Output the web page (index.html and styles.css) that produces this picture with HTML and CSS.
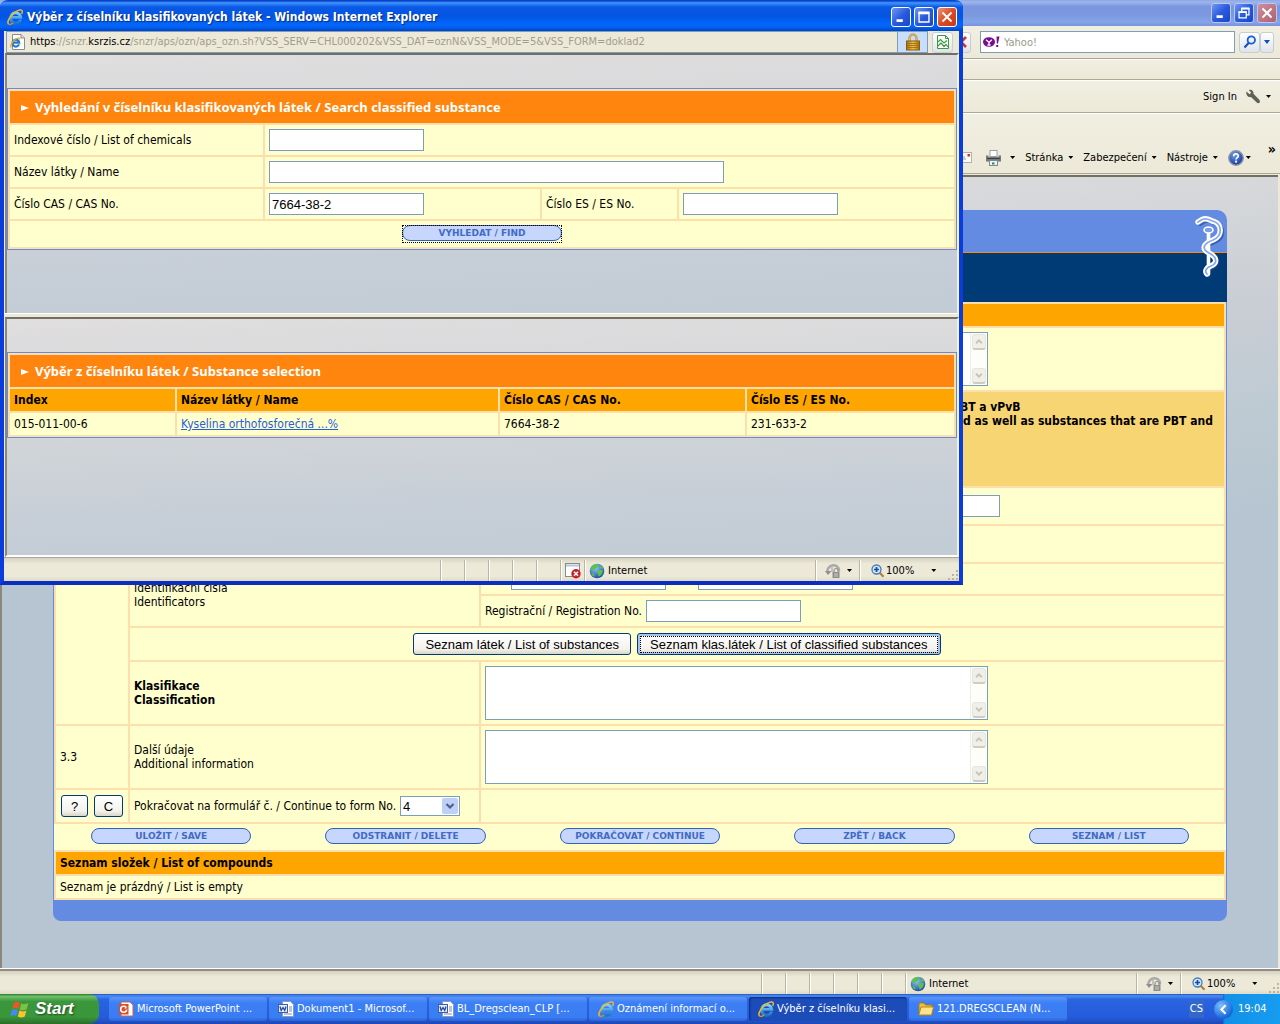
FILE: index.html
```html
<!DOCTYPE html>
<html lang="cs">
<head>
<meta charset="utf-8">
<title>Výběr z číselníku klasifikovaných látek</title>
<link rel="stylesheet" href="styles.css">
</head>
<body>
<svg class="sprite" aria-hidden="true">
  <defs>
    <linearGradient id="g-ie" x1="0" y1="0" x2="0" y2="1"><stop offset="0" stop-color="#7fd0f8"/><stop offset="1" stop-color="#1c74cc"/></linearGradient>
    <linearGradient id="g-lock" x1="0" y1="0" x2="1" y2="0"><stop offset="0" stop-color="#a8710c"/><stop offset=".5" stop-color="#f2c04c"/><stop offset="1" stop-color="#a8710c"/></linearGradient>
    <radialGradient id="g-globe" cx=".4" cy=".3" r=".8"><stop offset="0" stop-color="#8fc8f8"/><stop offset="1" stop-color="#123f94"/></radialGradient>
    <radialGradient id="g-help" cx=".4" cy=".3" r=".8"><stop offset="0" stop-color="#6d9bec"/><stop offset="1" stop-color="#0c2c8c"/></radialGradient>
  </defs>
  <symbol id="ie" viewBox="0 0 16 16">
    <path d="M13.600 10.600A5.200 5.200 0 1 1 13.800 8.400H5" fill="none" stroke="url(#g-ie)" stroke-width="2.900"/>
    <path d="M1.600 15.200C-.6 13 3 6.400 8.500 2.900 11.500 1 15 .2 15.300 2.200c.1 1-.3 1.900-.7 2.600" fill="none" stroke="#f2b52c" stroke-width="1.500"/>
    <path d="M1.600 15.200c1.200.8 3.200-.2 4.800-1.400" fill="none" stroke="#d9931a" stroke-width="1.300"/>
  </symbol>
  <symbol id="ie-page" viewBox="0 0 16 16">
    <path d="M2.500.5h8.500l3.500 3.500v11.500h-12z" fill="#fff" stroke="#8c8c8c"/><path d="M11 .5V4h3.500" fill="#ddd" stroke="#8c8c8c"/>
    <path d="M9 10.400A3.400 3.400 0 1 1 9.200 8.600H3.500" fill="none" stroke="#2379cf" stroke-width="2.200"/>
    <path d="M1 13.500C0 11 3 6.500 6 5c2.500-1.300 4-1 4 .5" fill="none" stroke="#efaa22" stroke-width="1.300"/>
  </symbol>
  <symbol id="lock" viewBox="0 0 16 18">
    <path d="M4.500 9V5.500a3.500 3.800 0 0 1 7 0V9" fill="none" stroke="#b98a2a" stroke-width="2.200"/>
    <path d="M4.500 9V5.500a3.500 3.800 0 0 1 7 0V9" fill="none" stroke="#f5d78a" stroke-width=".7"/>
    <rect x="1.500" y="8" width="13" height="9" fill="url(#g-lock)" stroke="#8a5c0a"/><path d="M2 10.500h12M2 12.500h12M2 14.500h12" stroke="#9a6a10" stroke-width=".8"/>
  </symbol>
  <symbol id="broken" viewBox="0 0 14 16">
    <path d="M1.500 1.500h8l3 3v10h-11z" fill="#fff" stroke="#3f9a3f"/><path d="M9.500 1.500v3h3" fill="none" stroke="#3f9a3f"/>
    <path d="M2 8l2.500-2.500L8 9l3-2.500M2 12l3-3 3 3.500 2-2 2 2.500" fill="none" stroke="#3f9a3f" stroke-width="1.200"/>
  </symbol>
  <symbol id="globe" viewBox="0 0 16 16">
    <circle cx="8" cy="8" r="7.300" fill="url(#g-globe)"/>
    <path d="M3 3.300C5 1 8 .7 9 1.200c-.5 1.500 1 2-.8 3.300-1.700.6-1.500 2.200-3.200 2.300C3.500 7 2 6.500 1.600 6c0-1 .6-1.900 1.400-2.700zM9 7.500c2-.8 3-.5 4.600-.5.600 2-1 5-3.600 6.500C8.500 12 9.800 10.500 8 9.500zM11 2.500c1.500.5 2.800 1.500 3.300 3-1.300.5-2.800 0-3.300-1zM2.500 10c1.500 0 2.700 1 3 2.500l-.6 1.300C3.500 13 2.700 11.500 2.500 10z" fill="#5cc24e"/>
  </symbol>
  <symbol id="blocked" viewBox="0 0 16 16">
    <rect x=".5" y=".5" width="14" height="13" fill="#fff" stroke="#8a8a8a"/><path d="M1 2.500h13" stroke="#b8c4d6" stroke-width="2"/>
    <circle cx="11" cy="10.800" r="4.700" fill="#c8202a"/><path d="M9 8.800l4 4m0-4l-4 4" stroke="#fff" stroke-width="1.500"/>
  </symbol>
  <symbol id="privacy" viewBox="0 0 16 16">
    <path d="M2 9C2.500 4 6 1.500 10 2.500c3 .8 4.500 3.500 4 6" fill="none" stroke="#a9a9a9" stroke-width="2.500"/><path d="M0 8l3 4 3.500-4z" fill="#8f8f8f"/>
    <path d="M7 4v5" stroke="#999"/><rect x="7.500" y="9" width="7" height="6" fill="#8d8d8d"/><path d="M9 9V7.500a2 2 0 0 1 4 0V9" fill="none" stroke="#8d8d8d" stroke-width="1.200"/><path d="M9 11h4M9 13h4" stroke="#ddd" stroke-width=".8"/>
  </symbol>
  <symbol id="zoom" viewBox="0 0 14 14">
    <path d="M8 8l4.500 4.800" stroke="#b08040" stroke-width="2.200"/><circle cx="5.500" cy="5.500" r="4.500" fill="#d4e8fb" stroke="#4a78b8" stroke-width="1.300"/><path d="M5.500 3v5M3 5.500h5" stroke="#0f4fa8" stroke-width="1.700"/>
  </symbol>
  <symbol id="search" viewBox="0 0 14 14">
    <circle cx="8.300" cy="5" r="3.700" fill="#e8f3ff" stroke="#1b5fd6" stroke-width="1.800"/><path d="M5.800 7.800L1.500 12.500" stroke="#1b4fc0" stroke-width="2.200"/>
  </symbol>
  <symbol id="wrench" viewBox="0 0 16 16">
    <path d="M1.500 2.500l3 2.700 1.700-1.500L3.800 1C6.500 0 9 2 8.500 4.800l6 6.200c1.500 2-.6 4-2.500 2.800L6 8C3.500 8.800.5 6 1.500 2.500z" fill="#5f6058"/>
  </symbol>
  <symbol id="printer" viewBox="0 0 17 16">
    <rect x="5" y=".5" width="7" height="6" fill="#fff" stroke="#a0a0a0"/><path d="M1 5.500h2.500V7h10V5.500H16v6H1z" fill="#77797d"/><path d="M2 8.500h13" stroke="#3f4144"/><rect x="4.500" y="10.500" width="8" height="5" fill="#eef4f4" stroke="#7d8c8c"/><path d="M7 12.500h2.500v2H7z" fill="#2a8a6a"/>
  </symbol>
  <symbol id="mail" viewBox="0 0 16 12">
    <rect x=".5" y=".5" width="15" height="10" fill="#fafafa" stroke="#b5b1a8"/><path d="M3 5h6M3 7h7" stroke="#999"/><rect x="11.500" y="2" width="2.500" height="2.500" fill="#d6322a"/>
  </symbol>
  <symbol id="help" viewBox="0 0 16 16">
    <circle cx="8" cy="8" r="7.200" fill="url(#g-help)" stroke="#8b93a8" stroke-width="1.500"/>
    <path d="M5.700 6.200C5.700 3.200 10.300 3.200 10.300 6c0 1.700-2.200 1.700-2.200 3.500" fill="none" stroke="#fff" stroke-width="1.700"/><circle cx="8.100" cy="11.700" r="1.100" fill="#fff"/>
  </symbol>
  <symbol id="yahoo" viewBox="0 0 17 12">
    <ellipse cx="6" cy="6" rx="6" ry="4.800" fill="#7a0c92"/><path d="M3 3.800l3 2.600 2.800-2.600M6 6.400v2.400M4.500 9h3" fill="none" stroke="#fff" stroke-width="1.300"/><path d="M13.500.5h3l-1.500 7h-1.200zM13.200 9h2v2h-2z" fill="#7a0c92"/>
  </symbol>
  <symbol id="stop" viewBox="0 0 16 16"><path d="M3 3l10 10M13 3L3 13" stroke="#c0392b" stroke-width="2.600"/></symbol>
  <symbol id="flag" viewBox="0 0 18 17">
    <path d="M3.500 2.500C5.500 1 7 1.500 9 2.500L7.500 8C5.500 7 4 7 2 8z" fill="#e8572a"/><path d="M10 3c2 1 4 1 6.500-.3L15 8.200c-2 1.200-4 1.300-6.300.2z" fill="#7dc242"/>
    <path d="M1.700 9c2-1 3.500-1 5.500 0l-1.500 5.500c-2-1-3.700-1-5.500 0z" fill="#3f8df0"/><path d="M8.500 9.500c2 1 4 1 6.300-.2l-1.500 5.500c-2.300 1.200-4.200 1-6.300 0z" fill="#fbc42c"/>
  </symbol>
  <symbol id="ppt" viewBox="0 0 16 16">
    <path d="M3 1h9l3 3v11H3z" fill="#fff" stroke="#d0604a"/><path d="M1 3h9.500v10.500H1z" fill="#d94e2a"/><circle cx="5.700" cy="8.200" r="3" fill="none" stroke="#fff" stroke-width="1.500"/><path d="M5.700 8.200h3.500V5.500" stroke="#d94e2a" stroke-width="1.200" fill="#fff"/>
  </symbol>
  <symbol id="word" viewBox="0 0 16 16">
    <path d="M4.500.5h8l3 3v12h-11z" fill="#fff" stroke="#8c9bbd"/><path d="M11 6h3M11 8h3M11 10h3M6 13h8" stroke="#7a8cb5"/><rect x=".5" y="3.500" width="9" height="8" fill="#e8effa" stroke="#3c5da8"/><path d="M2 5.500l1.200 4L5 6.500l1.700 3L8 5.500" fill="none" stroke="#23479c" stroke-width="1.300"/>
  </symbol>
  <symbol id="folder" viewBox="0 0 16 14">
    <path d="M1 12.500V2.500c0-1 .5-1.500 1.500-1.500h3.500l1.500 2h6.500v2" fill="#f1bf3c" stroke="#a67a12"/><path d="M1 12.500l2-7.500h12.500l-2 8H1.500z" fill="#fde38a" stroke="#b5871a"/>
  </symbol>
  <symbol id="win-min" viewBox="0 0 20 20"><path d="M5 14h7" stroke="#fff" stroke-width="3"/></symbol>
  <symbol id="win-max" viewBox="0 0 20 20"><path d="M4.500 5h11v10.500h-11z" fill="none" stroke="#fff" stroke-width="1.500"/><path d="M4 5.500h12" stroke="#fff" stroke-width="3"/></symbol>
  <symbol id="win-restore" viewBox="0 0 20 20"><path d="M7.500 8V5h8v7h-3" fill="none" stroke="#fff" stroke-width="1.400"/><path d="M7 5h9" stroke="#fff" stroke-width="2"/><path d="M4.500 9h8v6.500h-8z" fill="none" stroke="#fff" stroke-width="1.400"/><path d="M4 9h9" stroke="#fff" stroke-width="2"/></symbol>
  <symbol id="win-close" viewBox="0 0 20 20"><path d="M5 5l10 10M15 5L5 15" stroke="#fff" stroke-width="2.200"/></symbol>
  <symbol id="up" viewBox="0 0 14 15"><path d="M3.500 9.500L7 6l3.500 3.500" fill="none" stroke="#c6c5ba" stroke-width="2.200"/></symbol>
  <symbol id="down" viewBox="0 0 14 15"><path d="M3.500 5.500L7 9l3.500-3.500" fill="none" stroke="#c6c5ba" stroke-width="2.200"/></symbol>
  <symbol id="grip" viewBox="0 0 12 12"><path d="M9 1h2v2H9zM5 5h2v2H5zM9 5h2v2H9zM1 9h2v2H1zM5 9h2v2H5zM9 9h2v2H9z" fill="#b9b5a0"/></symbol>
</svg>

<div class="desktop">
  <section class="browser">
    <header class="titlebar inactive">
      <button class="winbtn" aria-label="Minimalizovat"><svg><use href="#win-min"/></svg></button>
      <button class="winbtn" aria-label="Obnovit"><svg><use href="#win-restore"/></svg></button>
      <button class="winbtn close" aria-label="Zavřít"><svg><use href="#win-close"/></svg></button>
    </header>
    <div class="bar address-row">
      <button class="softbtn stop" aria-label="Stop"><svg class="i16"><use href="#stop"/></svg></button>
      <label class="searchbox"><svg class="i17"><use href="#yahoo"/></svg><input type="text" placeholder="Yahoo!" aria-label="Yahoo!"></label>
      <div class="split">
        <button class="softbtn" aria-label="Hledat"><svg class="i14"><use href="#search"/></svg></button>
        <button class="softbtn narrow" aria-label="Možnosti hledání"><span class="caret blue"></span></button>
      </div>
    </div>
    <div class="bar links-row"></div>
    <div class="bar sign-row"><a href="#">Sign In</a><svg class="i16"><use href="#wrench"/></svg><span class="caret"></span></div>
    <nav class="bar command-row">
      <svg class="i16 mail"><use href="#mail"/></svg>
      <button class="cmd print" aria-label="Tisk"><svg class="i17"><use href="#printer"/></svg><span class="caret"></span></button>
      <button class="cmd">Stránka<span class="caret"></span></button>
      <button class="cmd">Zabezpečení<span class="caret"></span></button>
      <button class="cmd">Nástroje<span class="caret"></span></button>
      <button class="cmd help" aria-label="Nápověda"><svg class="i16"><use href="#help"/></svg><span class="caret"></span></button>
      <span class="more">»</span>
    </nav>

    <main class="page">
      <div class="panel">
        <div class="banner">
          <div class="banner-top"></div>
          <div class="banner-sub"></div>
          <svg class="emblem" viewBox="0 0 37 65">
            <g fill="none" stroke-linecap="round" stroke-linejoin="round">
              <g stroke="#1d3f8a" stroke-width="4" opacity=".55" transform="translate(2 2)"><path d="M8 8c4-2 4-4 9-3 3 .5 4 2 7 2.500 8 3 9 14-1 18.500-8 3-13 8-4 13 8 4 9 10 2 13-6 2-6 6-4 8"/></g>
              <path d="M18.500 16v44" stroke="#fff" stroke-width="3.600"/>
              <path d="M8 8c4-2 4-4 9-3 3 .5 4 2 7 2.500 8 3 9 14-1 18.500-8 3-13 8-4 13 8 4 9 10 2 13-6 2-6 6-4 8" stroke="#fff" stroke-width="5.400"/>
              <path d="M8 8c4-2 4-4 9-3 3 .5 4 2 7 2.500 8 3 9 14-1 18.500-8 3-13 8-4 13 8 4 9 10 2 13-6 2-6 6-4 8" stroke="#86a6ee" stroke-width="1.700"/>
              <ellipse cx="18.500" cy="16" rx="4.500" ry="3" fill="#7b9fec" stroke="#fff" stroke-width="1.600"/>
            </g>
          </svg>
        </div>
        <table class="grid form">
          <colgroup><col class="c-no"><col class="c-label"><col></colgroup>
          <tr class="h-head"><th colspan="3"></th></tr>
          <tr><td></td><td></td><td><div class="area"><textarea aria-label="Popis"></textarea><span class="scroll"><svg><use href="#up"/></svg><svg><use href="#down"/></svg></span></div></td></tr>
          <tr class="note"><td colspan="3"><p>PBT a vPvB<br>ied as well as substances that are PBT and</p></td></tr>
          <tr class="h-36"><td rowspan="6"></td><td></td><td><input class="w-long" type="text" aria-label="Název"></td></tr>
          <tr class="h-36"><td></td><td></td></tr>
          <tr><td rowspan="2" class="ident">Identifikační čísla<br>Identificators</td>
            <td><div class="field"><label for="cas">CAS</label><input id="cas" type="text"><label for="es" class="es">ES</label><input id="es" type="text"></div></td></tr>
          <tr><td><div class="field"><label for="reg">Registrační / Registration No.</label><input id="reg" type="text"></div></td></tr>
          <tr class="h-32"><td colspan="2"><div class="center"><button class="xp">Seznam látek / List of substances</button><button class="xp default"><span>Seznam klas.látek / List of classified substances</span></button></div></td></tr>
          <tr><td><label for="klas"><b>Klasifikace<br>Classification</b></label></td><td><div class="area"><textarea id="klas"></textarea><span class="scroll"><svg><use href="#up"/></svg><svg><use href="#down"/></svg></span></div></td></tr>
          <tr><td class="num">3.3</td><td><label for="dalsi">Další údaje<br>Additional information</label></td><td><div class="area"><textarea id="dalsi"></textarea><span class="scroll"><svg><use href="#up"/></svg><svg><use href="#down"/></svg></span></div></td></tr>
          <tr class="h-32"><td><div class="small-btns"><button class="xp">?</button><button class="xp">C</button></div></td>
            <td><div class="field"><label for="form-no">Pokračovat na formulář č. / Continue to form No.</label><select id="form-no"><option>4</option></select></div></td><td></td></tr>
        </table>
        <div class="actions">
          <button class="pill">ULOŽIT / SAVE</button><button class="pill">ODSTRANIT / DELETE</button><button class="pill">POKRAČOVAT / CONTINUE</button><button class="pill">ZPĚT / BACK</button><button class="pill">SEZNAM / LIST</button>
        </div>
        <table class="grid list">
          <tr class="h-head"><th>Seznam složek / List of compounds</th></tr>
          <tr class="h-head"><td>Seznam je prázdný / List is empty</td></tr>
        </table>
        <div class="panel-foot"></div>
      </div>
    </main>

    <footer class="status">
      <i></i><i></i><i></i><i></i><i></i><i></i>
      <span class="zone"><svg class="i16"><use href="#globe"/></svg>Internet</span>
      <span class="priv"><svg class="i16"><use href="#privacy"/></svg><span class="caret"></span></span>
      <span class="zoomer"><svg class="i14"><use href="#zoom"/></svg>100%<span class="caret"></span><svg class="grip"><use href="#grip"/></svg></span>
    </footer>
  </section>

  <section class="popup">
    <header class="titlebar">
      <svg class="i16"><use href="#ie"/></svg>
      <h1>Výběr z číselníku klasifikovaných látek - Windows Internet Explorer</h1>
      <button class="winbtn" aria-label="Minimalizovat"><svg><use href="#win-min"/></svg></button>
      <button class="winbtn" aria-label="Maximalizovat"><svg><use href="#win-max"/></svg></button>
      <button class="winbtn close" aria-label="Zavřít"><svg><use href="#win-close"/></svg></button>
    </header>
    <div class="url">
      <div class="url-box"><svg class="i16"><use href="#ie-page"/></svg><span><b>https</b>://snzr.<b>ksrzis.cz</b>/snzr/aps/ozn/aps_ozn.sh?VSS_SERV=CHL000202&amp;VSS_DAT=oznN&amp;VSS_MODE=5&amp;VSS_FORM=doklad2</span><button class="lock" aria-label="Zabezpečení"><svg><use href="#lock"/></svg></button></div>
      <button class="softbtn compat" aria-label="Kompatibilní zobrazení"><svg class="i16"><use href="#broken"/></svg></button>
    </div>
    <div class="frame first">
      <form class="box">
        <table class="grid find">
          <colgroup><col class="f1"><col class="f2"><col class="f3"><col></colgroup>
          <tr class="h-title"><th colspan="4">Vyhledání v číselníku klasifikovaných látek / Search classified substance</th></tr>
          <tr><td><label for="idx">Indexové číslo / List of chemicals</label></td><td colspan="3"><input id="idx" type="text"></td></tr>
          <tr><td><label for="name">Název látky / Name</label></td><td colspan="3"><input id="name" class="w-name" type="text"></td></tr>
          <tr><td><label for="casno">Číslo CAS / CAS No.</label></td><td><input id="casno" type="text" value="7664-38-2"></td><td><label for="esno">Číslo ES / ES No.</label></td><td><input id="esno" type="text"></td></tr>
          <tr class="h-find"><td colspan="4"><span class="focus"><button class="pill" type="button">VYHLEDAT / FIND</button></span></td></tr>
        </table>
      </form>
    </div>
    <div class="splitter"></div>
    <div class="frame second">
      <div class="box">
        <table class="grid pick">
          <colgroup><col class="p1"><col class="p2"><col class="p3"><col></colgroup>
          <tr class="h-title"><th colspan="4">Výběr z číselníku látek / Substance selection</th></tr>
          <tr class="h-head"><th>Index</th><th>Název látky / Name</th><th>Číslo CAS / CAS No.</th><th>Číslo ES / ES No.</th></tr>
          <tr class="h-head"><td>015-011-00-6</td><td><a href="#">Kyselina orthofosforečná ...%</a></td><td>7664-38-2</td><td>231-633-2</td></tr>
        </table>
      </div>
    </div>
    <footer class="status">
      <i></i><i></i><i></i><i></i><i></i><i><svg class="i16"><use href="#blocked"/></svg></i>
      <span class="zone"><svg class="i16"><use href="#globe"/></svg>Internet</span>
      <span class="priv"><svg class="i16"><use href="#privacy"/></svg><span class="caret"></span></span>
      <span class="zoomer"><svg class="i14"><use href="#zoom"/></svg>100%<span class="caret"></span><svg class="grip"><use href="#grip"/></svg></span>
    </footer>
  </section>

  <footer class="taskbar">
    <button class="start"><svg><use href="#flag"/></svg>Start</button>
    <div class="tasks">
      <button><svg class="i16"><use href="#ppt"/></svg>Microsoft PowerPoint ...</button>
      <button><svg class="i16"><use href="#word"/></svg>Dokument1 - Microsof...</button>
      <button><svg class="i16"><use href="#word"/></svg>BL_Dregsclean_CLP [...</button>
      <button><svg class="i16"><use href="#ie"/></svg>Oznámení informací o...</button>
      <button class="active"><svg class="i16"><use href="#ie"/></svg>Výběr z číselníku klasi...</button>
      <button><svg class="i16"><use href="#folder"/></svg>121.DREGSCLEAN (N...</button>
    </div>
    <span class="lang">CS</span>
    <div class="tray"><button class="expand" aria-label="Zobrazit skryté ikony"><svg viewBox="0 0 18 18"><path d="M11 5L7 9l4 4" fill="none" stroke="#fff" stroke-width="2"/></svg></button><time>19:04</time></div>
  </footer>
</div>
</body>
</html>
```
FILE: styles.css
```css
* { box-sizing: border-box; }
body {
  margin: 0;
  font: 12px/14px "DejaVu Sans Condensed", "DejaVu Sans", sans-serif;
  color: #000;
}
button, input, select, textarea { font: inherit; margin: 0; }
button { padding: 0; border: 0; background: none; color: inherit; }
p, h1 { margin: 0; }
.sprite { position: absolute; width: 0; height: 0; }
svg { flex: none; display: block; }
.i14 { width: 14px; height: 14px; }
.i16 { width: 16px; height: 16px; }
.i17 { width: 17px; height: 16px; }

.desktop { position: relative; display: flex; flex-direction: column; min-height: 100vh; overflow: hidden; }
.browser { flex: 1; display: flex; flex-direction: column; background: #ece9d8; }

/* window title bars */
.titlebar {
  display: flex; align-items: center; gap: 3px; height: 31px;
  background: linear-gradient(#0a48c8 0, #3f97fd 6%, #0a58e6 20%, #0355e2 50%, #0267fb 78%, #0260f2 88%, #0142c0 100%);
}
.titlebar.inactive {
  height: 26px; padding: 0 3px 1px; justify-content: flex-end;
  background: linear-gradient(#8ea6e4 0, #9db6ec 8%, #7b96df 25%, #7c99e0 60%, #83a6e8 85%, #7a93dc 100%);
}
.titlebar h1 { flex: 1; padding-left: 1px; font-size: 12px; line-height: 16px; color: #fff; text-shadow: 1px 1px 1px #0a2a80; }
.winbtn {
  width: 20px; height: 20px; border: 1px solid #fff; border-radius: 3px;
  background: linear-gradient(135deg, #6f98f2, #2a5bdc 50%, #1a45c8);
}
.winbtn svg { width: 18px; height: 18px; }
.winbtn.close { background: linear-gradient(135deg, #f0927a, #dd4a24 50%, #c53a14); }
.inactive .winbtn { border-color: #b9c8f0; }
.inactive .winbtn.close { background: linear-gradient(135deg, #cc8f9f, #b0606f); }

/* toolbars of the main window */
.bar { display: flex; align-items: center; justify-content: flex-end; background: linear-gradient(#f1efe2, #ece9d8); border-bottom: 1px solid #aca899; font-size: 11px; }
.address-row { height: 33px; padding: 0 6px 0 0; }
.links-row { height: 21px; border-top: 1px solid #fff; }
.sign-row { height: 33px; gap: 8px; padding-right: 9px; border-top: 1px solid #fff; }
.sign-row a { color: #000; text-decoration: none; }
.sign-row .caret { margin-left: -3px; }
.command-row { height: 61px; padding: 28px 4px 0 0; border-top: 1px solid #fff; }
.softbtn { display: flex; align-items: center; justify-content: center; width: 21px; height: 21px; border: 1px solid #c8ccd4; border-radius: 3px; background: linear-gradient(#fff, #dfe3ea); }
.stop { margin-right: 9px; }
.searchbox { display: flex; align-items: center; gap: 4px; width: 255px; height: 22px; margin-right: 4px; padding-left: 2px; border: 1px solid #7f9db9; background: #fff; }
.searchbox input { flex: 1; min-width: 0; border: 0; padding: 0; outline: 0; height: 16px; background: none; }
.searchbox input::placeholder { color: #9c9a8c; opacity: 1; }
.searchbox svg { height: 12px; }
.split { display: flex; }
.narrow { width: 14px; }
.caret { width: 5px; height: 3px; background: #000; clip-path: polygon(0 0, 100% 0, 50% 100%); }
.caret.blue { width: 6px; height: 4px; background: #0b4fc8; }
.cmd { display: flex; align-items: center; gap: 5px; margin-left: 10px; }
.mail { height: 12px; }
.cmd.print { gap: 8px; margin-left: 13px; }
.cmd.help { gap: 2px; }
.more { align-self: flex-start; margin-left: 17px; font-size: 14px; line-height: 14px; font-weight: bold; }

/* page area */
.page {
  flex: 1; margin: 1px 2px 0 0; padding: 33px 51px 48px 51px;
  border-left: 2px solid #8a877b; border-top: 2px solid #716f64;
  background: linear-gradient(176deg, #e0dedf 0, #d2d5d8 15%, #c9cdd4 25%, #bfcbd3 35%, #b6c5d1 48%);
}
.banner { position: relative; }
.banner-top { height: 42px; border-radius: 0 10px 0 0; background: #638be2; }
.banner-sub { height: 50px; border-top: 1px solid #ff8a0c; background: #003b76; }
.emblem { position: absolute; right: 0; top: 4px; width: 37px; height: 65px; }

.grid { width: 100%; table-layout: fixed; border-spacing: 2px; background: #fddfae; text-align: left; }
.grid td, .grid th { padding: 4px; height: 22px; background: #fffecd; }
.grid th { background: #ffa500; }
.form, .list, .actions { border-left: 1px solid #638be2; border-right: 1px solid #638be2; }
.c-no { width: 72px; }
.c-label { width: 349px; }
.h-36 td { height: 36px; }
.h-32 td { height: 32px; }
.note td { height: 94px; padding: 8px 4px; vertical-align: top; background: #f8d573; font-weight: bold; }
.note p { padding-left: 892px; white-space: nowrap; }
.field { display: flex; align-items: center; gap: 4px; }
.field .es { margin-left: 11px; }
.grid input { display: block; width: 155px; height: 22px; padding: 0 2px; border: 1px solid #7f9db9; background: #fff; font: 13px "Liberation Sans", Arial, sans-serif; }
.grid input.w-long { width: 515px; }
.grid input.w-name { width: 455px; }
.area { display: flex; width: 503px; height: 54px; border: 1px solid #7f9db9; background: #fff; }
.area textarea { flex: 1; border: 0; padding: 2px; resize: none; outline: 0; }
.scroll { display: flex; flex-direction: column; justify-content: space-between; width: 17px; padding: 1px; border-left: 1px solid #eeede5; background: #fdfdfa; }
.scroll svg { width: 14px; height: 16px; border: 1px solid #e6e4dc; border-bottom: 2px solid #cfccc0; border-radius: 3px; background: #f0efe8; }
.center { display: flex; justify-content: center; gap: 6px; }
.xp { height: 22px; padding: 0 9px; border: 1px solid #003c74; border-radius: 3px; background: linear-gradient(#fff, #f3f2ee 75%, #d9d5c8); font: 13px "Liberation Sans", Arial, sans-serif; white-space: nowrap; }
.center .xp { padding: 0 11px; }
.xp.default { box-shadow: inset 0 0 0 2px #a9c2f0; }
.center .xp.default { padding: 0 2px; }
.xp.default span { display: block; padding: 0 9px; border: 1px dotted #000; line-height: 15px; }
.small-btns { display: flex; gap: 6px; padding-left: 1px; }
.small-btns .xp { width: 27px; padding: 0; }
.small-btns .xp:last-child { width: 29px; }
select {
  appearance: none; width: 60px; height: 20px; padding: 0 2px; border: 1px solid #7f9db9; border-radius: 0;
  background: #fff url("data:image/svg+xml,%3Csvg xmlns='http://www.w3.org/2000/svg' width='16' height='16'%3E%3Crect width='16' height='16' rx='2' fill='%23bfd0f8'/%3E%3Cpath d='M4.500 6L8 9.500 11.500 6' fill='none' stroke='%234d6185' stroke-width='2.200'/%3E%3C/svg%3E") right 1px center no-repeat;
}
.field select { font: 13px "Liberation Sans", Arial, sans-serif; }
.actions { display: flex; padding: 4px 0 6px; background: #fffecd; }
.actions .pill { margin: 0 37px; flex: 1 0 0; }
.pill { width: 160px; height: 16px; border: 1px solid #2f62b8; border-radius: 8px; background: #c6d6fd; color: #416bc4; font: bold 9px/14px "DejaVu Sans", sans-serif; white-space: nowrap; }
.panel-foot { height: 21px; border-radius: 0 0 8px 8px; background: #638be2; }

/* status bars */
.status { display: flex; justify-content: flex-end; height: 24px; padding-top: 2px; border-top: 1px solid #aca899; background: linear-gradient(#d6d2c2, #ece9d8 25%, #ece9d8 80%, #dedac8); font-size: 11px; }
.page + .status { height: 25px; border-top: 2px solid #8f8c80; outline: 1px solid #fff; }
.status i, .status > span { display: flex; align-items: center; border-left: 1px solid #b9b5a2; box-shadow: inset 1px 0 #fff; }
.status i { width: 24px; padding-left: 4px; }
.status .zone { width: 231px; padding-left: 4px; gap: 3px; }
.status .priv { width: 44px; padding-left: 9px; gap: 6px; }
.status .zoomer { width: 100px; padding-left: 11px; gap: 1px; }
.zoomer .caret { margin-left: 16px; }
.grip { width: 12px; height: 12px; margin-left: auto; align-self: flex-end; }

/* pop-up window */
.popup {
  position: absolute; left: 0; top: 0; width: calc(75% + 3px);
  border: 1px solid #0831a8; border-width: 1px 4px 4px; border-color: #0b3fd0 #0a3ddc #0a2fc0; border-radius: 8px 8px 0 0;
  background: #ece9d8;
}
.popup .titlebar { height: 30px; border-radius: 6px 6px 0 0; margin: 0 -4px; padding: 2px 6px 0 7px; }
.url { display: flex; align-items: center; gap: 4px; height: 22px; padding: 0 6px 0 2px; }
.url-box { flex: 1; display: flex; align-items: center; gap: 4px; height: 22px; padding-left: 3px; border: 1px solid #7f9db9; font-size: 11px; color: #a19e8e; white-space: nowrap; }
.url-box span { flex: 1; }
.url-box b { font-weight: normal; color: #000; }
.lock { width: 30px; height: 20px; border-left: 1px solid #7f9db9; background: #c9defa; display: grid; place-items: center; }
.lock svg { width: 16px; height: 18px; }
.frame { border-top: 2px solid #716f64; border-left: 2px solid #8a877b; border-right: 2px solid #f4f2e8; margin-left: 1px; padding-top: 33px; background: linear-gradient(178deg, #e0dedf 0, #d3d6d8 40%, #c6ced7 75%, #c2ccd5 100%); }
.frame.first { min-height: 260px; }
.frame.second { min-height: 240px; border-bottom: 2px solid #fff; }
.splitter { height: 4px; background: #ece9d8; border-top: 1px solid #fff; }
.box { border: 1px solid #638be2; }
.grid tr.h-title th { height: 32px; padding: 0 10px; background: #ff850e; color: #fff; font: bold 13px/16px "Noto Sans", sans-serif; }
.h-title th::before { content: ""; display: inline-block; width: 8px; height: 6px; margin: 0 6px 1px 1px; background: #fff; clip-path: polygon(0 0, 100% 50%, 0 100%); }
.f1 { width: 253px; }
.f2 { width: 275px; }
.f3 { width: 135px; }
.p1 { width: 165px; }
.p2 { width: 321px; }
.p3 { width: 245px; }
.h-find td { height: 26px; padding: 4px; }
.focus { display: block; width: 160px; height: 18px; margin: 0 auto; outline: 1px dotted #000; outline-offset: -1px; }
.focus .pill { display: block; }
.pick a { color: #1f5fe0; }

/* taskbar */
.taskbar { display: flex; align-items: center; height: 30px; background: linear-gradient(#1f4fc0 0, #4a8cf0 6%, #2a64e0 18%, #245bdb 80%, #1d48b4 100%); color: #fff; font-size: 11px; }
.start { display: flex; align-items: center; gap: 5px; width: 99px; height: 30px; padding: 0 0 0 10px; border-radius: 0 10px 10px 0; background: linear-gradient(#2c7a2c 0, #6fbf6a 8%, #3c963c 25%, #3a973a 75%, #2a6e2a 100%); font: italic bold 17px "Liberation Sans", sans-serif; text-shadow: 1px 1px 2px #1a4a1a; }
.start svg { width: 20px; height: 19px; }
.tasks { flex: 1; display: flex; gap: 2px; padding-left: 10px; }
.tasks button { display: flex; align-items: center; gap: 3px; width: 158px; height: 24px; padding-left: 9px; border-radius: 3px; background: linear-gradient(#5b95f8, #3c7ff5 25%, #3a7cf2 85%, #2c62d8); white-space: nowrap; }
.tasks button.active { background: #1c4cb8; box-shadow: inset 1px 1px 2px #0d2d80; }
.lang { margin-right: 10px; padding: 2px 1px; background: #3468c8; }
.tray { display: flex; align-items: center; gap: 5px; height: 30px; width: 66px; background: linear-gradient(90deg, transparent 9px, #0d6ac8 9px, #1290e8 11px, #169cf0 100%); }
.expand { width: 19px; height: 19px; border-radius: 50%; background: radial-gradient(circle at 35% 30%, #7cc0ff, #1668d8 70%); }
```
